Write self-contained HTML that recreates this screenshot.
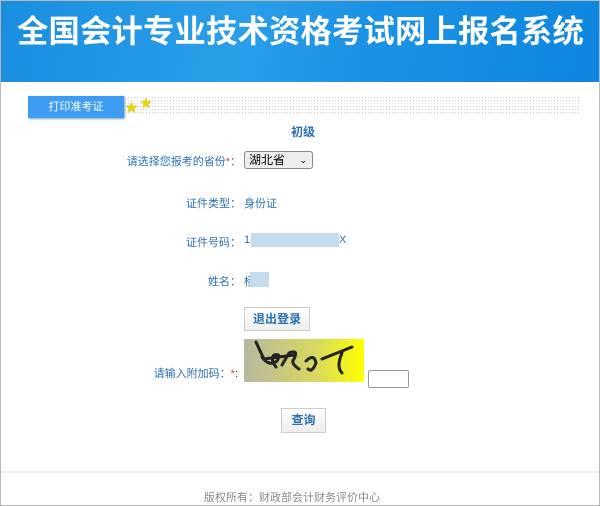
<!DOCTYPE html>
<html><head><meta charset="utf-8"><style>
*{margin:0;padding:0;box-sizing:border-box}
body{width:600px;height:506px;overflow:hidden;background:#fff;font-family:"Liberation Sans","Noto Sans CJK SC",sans-serif;position:relative;border:1px solid #b8b8b8}
.a{position:absolute}
.hd{left:0;top:0;width:598px;height:81px;background:linear-gradient(100deg,#1a8fe0 0%,#2a9ee8 40%,#1b92e4 60%,#0e86df 100%)}
.tt{left:16px;top:6px;font-size:31.3px;font-weight:bold;color:#fff;white-space:nowrap;letter-spacing:0.2px}
.tab{left:27px;top:95px;width:96px;height:22px;background:#3e9cf2;color:#fff;font-size:11px;line-height:22px;text-align:center;box-shadow:1px 1px 2px #7aa}
.dots{left:123px;top:95px;width:457px;height:18px;background-image:radial-gradient(#ccc 0.6px,transparent 0.8px);background-size:3px 3px}
.lbl{font-size:11px;color:#2a6fb0;text-align:right;width:200px}
.v{font-size:11px;color:#2a6fb0}
.btn{border:1px solid #ccc;background:linear-gradient(#fff,#eee);color:#2a6fb0;font-size:12px;font-weight:bold;text-align:center}
</style></head><body>
<div class="a hd"></div>
<div class="a tt">全国会计专业技术资格考试网上报名系统</div>
<div class="a tab">打印准考证</div>
<div class="a dots"></div>
<div class="a" style="left:124px;top:96px;color:#e8d800;font-size:13px;text-shadow:0 0 1px #996">★</div>
<div class="a" style="left:139px;top:93px;color:#e8d800;font-size:12px;text-shadow:0 0 1px #996">★</div>
<div class="a" style="left:290px;top:122px;font-size:12px;font-weight:bold;color:#2a6fb0">初级</div>
<div class="a lbl" style="left:40px;top:152px">请选择您报考的省份<span style="color:#e33">*</span>：</div>
<div class="a" style="left:243px;top:150px;width:69px;height:18px;border:1px solid #888;border-radius:3px;background:#eee;font-size:12px;line-height:16px;padding-left:4px">湖北省<span style="position:absolute;right:5px;font-size:9px">⌄</span></div>
<div class="a lbl" style="left:40px;top:194px">证件类型：</div>
<div class="a v" style="left:243px;top:194px">身份证</div>
<div class="a lbl" style="left:40px;top:233px">证件号码：</div>
<div class="a v" style="left:243px;top:233px">1</div>
<div class="a" style="left:250px;top:232px;width:88px;height:14px;background:#c5dcef"></div>
<div class="a v" style="left:338px;top:233px">X</div>
<div class="a lbl" style="left:40px;top:272px">姓名：</div>
<div class="a v" style="left:243px;top:272px">杨</div>
<div class="a" style="left:249px;top:271px;width:19px;height:15px;background:#c5dcef"></div>
<div class="a btn" style="left:243px;top:306px;width:66px;height:24px;line-height:22px">退出登录</div>
<div class="a lbl" style="left:37px;top:364px">请输入附加码：<span style="color:#e33">*</span><span style="color:#333">:</span></div>
<div class="a" style="left:243px;top:338px;width:120px;height:43px;background:linear-gradient(90deg,#b8b8a0,#d8d860 60%,#ffff00)">
<svg width="120" height="43"><g fill="none" stroke="#222" stroke-width="3" stroke-linecap="round"><path d="M12 3 Q16 12 20 20 L50 16 M18 18 Q25 28 33 22 Q38 14 30 16 Q26 20 32 28 M38 26 L45 14 Q55 10 50 20 Q46 24 55 30 M62 22 Q70 14 72 24 Q68 34 64 30 M78 20 L108 8 M98 14 Q92 28 98 34"/></g></svg></div>
<div class="a" style="left:367px;top:369px;width:41px;height:18px;border:1px solid #999;border-radius:2px"></div>
<div class="a btn" style="left:280px;top:407px;width:45px;height:25px;line-height:23px">查询</div>
<div class="a" style="left:0;top:470px;width:598px;height:2px;background:#f0f0f0"></div>
<div class="a" style="left:203px;top:488px;font-size:11px;color:#888">版权所有：财政部会计财务评价中心</div>
</body></html>
